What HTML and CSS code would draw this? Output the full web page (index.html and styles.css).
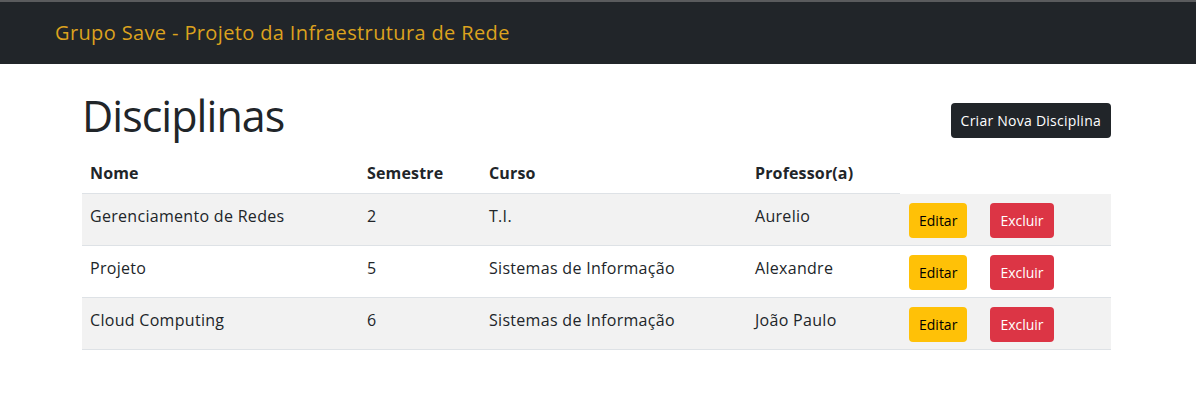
FILE: index.html
```html
<!DOCTYPE html>
<html lang="pt-BR">
<head>
<meta charset="utf-8">
<title>Disciplinas</title>
<link rel="stylesheet" href="styles.css">
</head>
<body>
<nav class="navbar">
  <a class="brand" href="#">Grupo Save - Projeto da Infraestrutura de Rede</a>
</nav>
<main class="container">
  <div class="page-head">
    <h1 class="title">Disciplinas</h1>
    <a class="btn btn-dark" href="#">Criar Nova Disciplina</a>
  </div>
  <table class="table">
    <colgroup>
      <col class="c-nome"><col class="c-sem"><col class="c-curso"><col class="c-prof"><col class="c-act">
    </colgroup>
    <thead>
      <tr><th>Nome</th><th>Semestre</th><th>Curso</th><th>Professor(a)</th></tr>
    </thead>
    <tbody>
      <tr class="odd">
        <td>Gerenciamento de Redes</td><td>2</td><td>T.I.</td><td>Aurelio</td>
        <td class="act"><div class="actions"><a class="btn btn-warning" href="#">Editar</a><a class="btn btn-danger" href="#">Excluir</a></div></td>
      </tr>
      <tr>
        <td>Projeto</td><td>5</td><td>Sistemas de Informação</td><td>Alexandre</td>
        <td class="act"><div class="actions"><a class="btn btn-warning" href="#">Editar</a><a class="btn btn-danger" href="#">Excluir</a></div></td>
      </tr>
      <tr class="odd">
        <td>Cloud Computing</td><td>6</td><td>Sistemas de Informação</td><td>João Paulo</td>
        <td class="act"><div class="actions"><a class="btn btn-warning" href="#">Editar</a><a class="btn btn-danger" href="#">Excluir</a></div></td>
      </tr>
    </tbody>
  </table>
</main>
</body>
</html>
```

FILE: styles.css
```css
* { box-sizing: border-box; }
body {
  margin: 0;
  font-family: "Open Sans", "Noto Sans", sans-serif;
  font-size: 16px;
  line-height: 1.5;
  color: #212529;
  background: #fff;
}
.navbar {
  border-top: 2px solid #5a5b5d;
  background: #212529;
  height: 64px;
  display: flex;
  align-items: center;
  padding-left: 55px;
}
.brand {
  color: #dca21e;
  font-size: 20px;
  line-height: 30px;
  letter-spacing: 0.37px;
  text-decoration: none;
}
.container {
  width: 1029px;
  margin-left: 82px;
}
.page-head {
  display: flex;
  justify-content: space-between;
  align-items: flex-start;
  padding-top: 26px;
  margin-bottom: 11px;
}
.title {
  margin: 0;
  font-size: 43px;
  line-height: 52px;
  font-weight: 400;
  letter-spacing: -0.95px;
}
.btn {
  display: inline-block;
  font-size: 14px;
  line-height: 21px;
  padding: 6px 9px;
  border: 1px solid transparent;
  border-radius: 4px;
  text-decoration: none;
  white-space: nowrap;
}
.page-head .btn { margin-top: 13px; letter-spacing: 0.25px; }
.btn-dark { background: #212529; color: #fff; }
.btn-warning { background: #ffc107; color: #000; }
.btn-danger { background: #dc3545; color: #fff; }
.table {
  width: 100%;
  border-collapse: collapse;
  table-layout: fixed;
}
.c-nome { width: 277px; }
.c-sem { width: 122px; }
.c-curso { width: 266px; }
.c-prof { width: 153px; }
.c-act { width: 211px; }
.table th,
.table td {
  padding: 8px;
  text-align: left;
  vertical-align: top;
  border-bottom: 1px solid #dee2e6;
}
.table th { font-weight: 700; letter-spacing: 0.15px; }
.table td { padding: 10px 8px 6px; letter-spacing: 0.3px; }
.table tr.odd td { background: #f2f2f2; }
.table td.act { padding: 9px 8px 7px 9px; letter-spacing: 0; }
.actions {
  display: flex;
  gap: 23px;
}
```
